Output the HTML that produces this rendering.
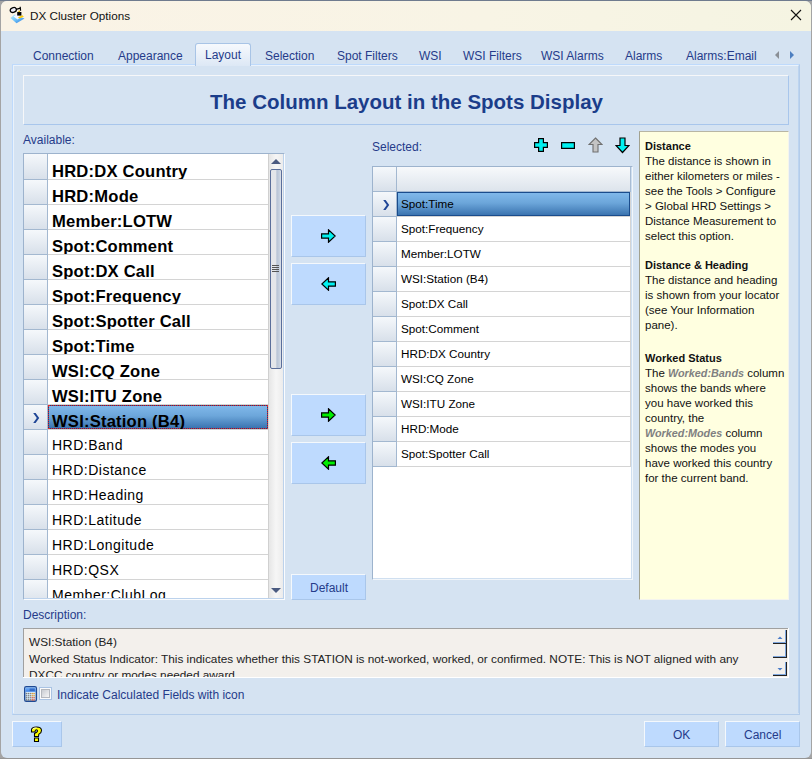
<!DOCTYPE html>
<html><head><meta charset="utf-8">
<style>
*{box-sizing:border-box;margin:0;padding:0}
html,body{width:812px;height:759px;overflow:hidden;background:#a4a4a4;font-family:"Liberation Sans",sans-serif;position:relative}
.a{position:absolute}
.t{position:absolute;white-space:nowrap;line-height:1}
.tab{position:absolute;top:50px;font-size:12px;color:#253b8a;white-space:nowrap;line-height:1}
.btn{position:absolute;background:#bedafe;border-top:1px solid #f4f8fc;border-left:1px solid #f4f8fc;border-right:1px solid #a9c6ea;border-bottom:1px solid #a9c6ea}
.lbl{position:absolute;font-size:12px;color:#253b8a;white-space:nowrap;line-height:1}
.rh{position:absolute;background:linear-gradient(#f5f8fb,#d8e0ea);border-right:1px solid #a3b8d0;border-bottom:1px solid #a3b8d0}
.rc{position:absolute;background:#fff;border-bottom:1px solid #d4d4d4;overflow:hidden;white-space:nowrap;color:#000}
.clip{position:absolute;overflow:hidden}
</style></head><body>
<div class="a" style="left:0;top:0;width:812px;height:1px;background:#6f7b8e"></div>
<div class="a" style="left:0;top:758px;width:812px;height:1px;background:#959595"></div>
<div class="a" style="left:1px;top:1px;width:810px;height:757px;background:#d5e3f2;border-radius:6px"></div>
<div class="a" style="left:1px;top:1px;width:810px;height:30px;background:linear-gradient(90deg,#faf3e6,#f8f4e5 60%,#f5f4e2);border-radius:6px 6px 0 0"></div>
<svg class="a" style="left:9px;top:5px" width="17" height="19" viewBox="0 0 17 19">
<defs><linearGradient id="gb" x1="0" y1="0" x2="1" y2="1"><stop offset="0" stop-color="#b8eeff"/><stop offset="0.5" stop-color="#6cc0f8"/><stop offset="1" stop-color="#2a78e0"/></linearGradient></defs>
<path d="M1.5 13L5.5 9.5L15.5 13.5L7.5 18.2Z" fill="url(#gb)"/>
<path d="M4.5 11.5L7.5 9.5L12.5 11.8L8.5 14.5Z" fill="#f6f6ff"/>
<path d="M9 12.2L13.5 10.3L14.8 11.8L10.2 13.6Z" fill="#ffcc00"/>
<ellipse cx="4.3" cy="5" rx="3.1" ry="2.4" transform="rotate(-22 4.3 5)" fill="#ececf8" stroke="#000" stroke-width="1.3"/>
<path d="M7 4.3L11.5 3.2M11.2 1.8L11.6 5.8" stroke="#000" stroke-width="1.2"/>
<path d="M8.2 7H12.4V10.6H8.2Z" fill="#000"/>
<circle cx="10.2" cy="6.3" r="0.9" fill="#d8b000"/>
</svg>
<div class="t" style="left:30px;top:10px;font-size:11.7px;color:#111">DX Cluster Options</div>
<svg class="a" style="left:790px;top:9px" width="12" height="12" viewBox="0 0 12 12"><path d="M1 1L11 11M11 1L1 11" stroke="#111" stroke-width="1.1"/></svg>
<div class="tab" style="left:33px">Connection</div>
<div class="tab" style="left:118px">Appearance</div>
<div class="tab" style="left:265px">Selection</div>
<div class="tab" style="left:337px">Spot Filters</div>
<div class="tab" style="left:419px">WSI</div>
<div class="tab" style="left:463px">WSI Filters</div>
<div class="tab" style="left:541px">WSI Alarms</div>
<div class="tab" style="left:625px">Alarms</div>
<div class="tab" style="left:686px">Alarms:Email</div>
<svg class="a" style="left:774px;top:50px" width="22" height="10" viewBox="0 0 22 10"><path d="M5 1L1 5L5 9Z" fill="#8a8f96"/><path d="M16 1L20 5L16 9Z" fill="#4d7fc0"/></svg>
<div class="a" style="left:12px;top:64px;width:788px;height:651px;border:1px solid #b3ccea;border-top-color:#bedafc;border-left-color:#bedafc"></div>
<div class="a" style="left:13px;top:65px;width:786px;height:648px;border-top:1px solid #eaf2fb;border-left:1px solid #eaf2fb;border-right:1px solid #bcd4f0"></div>
<div class="a" style="left:195px;top:43px;width:56px;height:23px;border:1px solid #a8c4e6;border-bottom:none;border-radius:3px 3px 0 0;background:linear-gradient(#f6f9fd,#dde8f5)"></div>
<div class="tab" style="left:205px;top:49px">Layout</div>
<div class="a" style="left:23px;top:75px;width:766px;height:50px;border:1px solid #a8c6ec;border-top-color:#f6f7f9;border-left-color:#f6f7f9"></div>
<div class="t" style="left:210px;top:92px;font-size:20.5px;font-weight:bold;color:#1b3d8a">The Column Layout in the Spots Display</div>
<div class="lbl" style="left:23px;top:134px">Available:</div>
<div class="lbl" style="left:372px;top:141px">Selected:</div>
<div class="a" style="left:23px;top:153px;width:262px;height:447px;border:1px solid #fafcfe;border-top-color:#9db3cd;border-left-color:#9db3cd;background:#fff"></div>
<div class="a" style="left:24px;top:154px;width:260px;height:445px;border-right:1px solid #bcd2ec;border-bottom:1px solid #bcd2ec"></div>
<div class="clip" style="left:24px;top:154px;width:244px;height:444px">
<div class="rh" style="left:0;top:0px;width:24px;height:26px"></div>
<div class="rc" style="left:24px;top:0px;width:220px;height:26px"></div>
<div class="clip" style="left:24px;top:0px;width:220px;height:25px"><div class="t" style="left:4px;top:10px;font-size:16.6px;font-weight:bold;color:#000;letter-spacing:0.2px">HRD:DX Country</div></div>
<div class="rh" style="left:0;top:26px;width:24px;height:25px"></div>
<div class="rc" style="left:24px;top:26px;width:220px;height:25px"></div>
<div class="clip" style="left:24px;top:26px;width:220px;height:24px"><div class="t" style="left:4px;top:9px;font-size:16.6px;font-weight:bold;color:#000;letter-spacing:0.2px">HRD:Mode</div></div>
<div class="rh" style="left:0;top:51px;width:24px;height:25px"></div>
<div class="rc" style="left:24px;top:51px;width:220px;height:25px"></div>
<div class="clip" style="left:24px;top:51px;width:220px;height:24px"><div class="t" style="left:4px;top:9px;font-size:16.6px;font-weight:bold;color:#000;letter-spacing:0.2px">Member:LOTW</div></div>
<div class="rh" style="left:0;top:76px;width:24px;height:25px"></div>
<div class="rc" style="left:24px;top:76px;width:220px;height:25px"></div>
<div class="clip" style="left:24px;top:76px;width:220px;height:24px"><div class="t" style="left:4px;top:9px;font-size:16.6px;font-weight:bold;color:#000;letter-spacing:0.2px">Spot:Comment</div></div>
<div class="rh" style="left:0;top:101px;width:24px;height:25px"></div>
<div class="rc" style="left:24px;top:101px;width:220px;height:25px"></div>
<div class="clip" style="left:24px;top:101px;width:220px;height:24px"><div class="t" style="left:4px;top:9px;font-size:16.6px;font-weight:bold;color:#000;letter-spacing:0.2px">Spot:DX Call</div></div>
<div class="rh" style="left:0;top:126px;width:24px;height:25px"></div>
<div class="rc" style="left:24px;top:126px;width:220px;height:25px"></div>
<div class="clip" style="left:24px;top:126px;width:220px;height:24px"><div class="t" style="left:4px;top:9px;font-size:16.6px;font-weight:bold;color:#000;letter-spacing:0.2px">Spot:Frequency</div></div>
<div class="rh" style="left:0;top:151px;width:24px;height:25px"></div>
<div class="rc" style="left:24px;top:151px;width:220px;height:25px"></div>
<div class="clip" style="left:24px;top:151px;width:220px;height:24px"><div class="t" style="left:4px;top:9px;font-size:16.6px;font-weight:bold;color:#000;letter-spacing:0.2px">Spot:Spotter Call</div></div>
<div class="rh" style="left:0;top:176px;width:24px;height:25px"></div>
<div class="rc" style="left:24px;top:176px;width:220px;height:25px"></div>
<div class="clip" style="left:24px;top:176px;width:220px;height:24px"><div class="t" style="left:4px;top:9px;font-size:16.6px;font-weight:bold;color:#000;letter-spacing:0.2px">Spot:Time</div></div>
<div class="rh" style="left:0;top:201px;width:24px;height:25px"></div>
<div class="rc" style="left:24px;top:201px;width:220px;height:25px"></div>
<div class="clip" style="left:24px;top:201px;width:220px;height:24px"><div class="t" style="left:4px;top:9px;font-size:16.6px;font-weight:bold;color:#000;letter-spacing:0.2px">WSI:CQ Zone</div></div>
<div class="rh" style="left:0;top:226px;width:24px;height:25px"></div>
<div class="rc" style="left:24px;top:226px;width:220px;height:25px"></div>
<div class="clip" style="left:24px;top:226px;width:220px;height:24px"><div class="t" style="left:4px;top:9px;font-size:16.6px;font-weight:bold;color:#000;letter-spacing:0.2px">WSI:ITU Zone</div></div>
<div class="rh" style="left:0;top:251px;width:24px;height:25px"></div>
<div class="rc" style="left:24px;top:251px;width:220px;height:25px"></div>
<div class="a" style="left:24px;top:251px;width:220px;height:24px;background:#1c3f80"></div>
<div class="a" style="left:24px;top:251px;width:220px;height:24px;border:1px dotted #e02828;background:linear-gradient(#80b8ea,#6ca6da 45%,#3b74b0) padding-box"></div>
<svg class="a" style="left:9px;top:259px" width="7" height="10" viewBox="0 0 7 10"><path d="M0.2 0L2.6 0L6.2 5L2.6 10L0.2 10L3.8 5Z" fill="#1f4596"/></svg>
<div class="clip" style="left:24px;top:251px;width:220px;height:24px"><div class="t" style="left:4px;top:9px;font-size:16.6px;font-weight:bold;color:#000;letter-spacing:0.2px">WSI:Station (B4)</div></div>
<div class="rh" style="left:0;top:276px;width:24px;height:25px"></div>
<div class="rc" style="left:24px;top:276px;width:220px;height:25px"></div>
<div class="t" style="left:28px;top:284px;font-size:14px;color:#000;letter-spacing:0.5px">HRD:Band</div>
<div class="rh" style="left:0;top:301px;width:24px;height:25px"></div>
<div class="rc" style="left:24px;top:301px;width:220px;height:25px"></div>
<div class="t" style="left:28px;top:309px;font-size:14px;color:#000;letter-spacing:0.5px">HRD:Distance</div>
<div class="rh" style="left:0;top:326px;width:24px;height:25px"></div>
<div class="rc" style="left:24px;top:326px;width:220px;height:25px"></div>
<div class="t" style="left:28px;top:334px;font-size:14px;color:#000;letter-spacing:0.5px">HRD:Heading</div>
<div class="rh" style="left:0;top:351px;width:24px;height:25px"></div>
<div class="rc" style="left:24px;top:351px;width:220px;height:25px"></div>
<div class="t" style="left:28px;top:359px;font-size:14px;color:#000;letter-spacing:0.5px">HRD:Latitude</div>
<div class="rh" style="left:0;top:376px;width:24px;height:25px"></div>
<div class="rc" style="left:24px;top:376px;width:220px;height:25px"></div>
<div class="t" style="left:28px;top:384px;font-size:14px;color:#000;letter-spacing:0.5px">HRD:Longitude</div>
<div class="rh" style="left:0;top:401px;width:24px;height:25px"></div>
<div class="rc" style="left:24px;top:401px;width:220px;height:25px"></div>
<div class="t" style="left:28px;top:409px;font-size:14px;color:#000;letter-spacing:0.5px">HRD:QSX</div>
<div class="rh" style="left:0;top:426px;width:24px;height:25px"></div>
<div class="rc" style="left:24px;top:426px;width:220px;height:25px"></div>
<div class="t" style="left:28px;top:434px;font-size:14px;color:#000;letter-spacing:0.5px">Member:ClubLog</div>
</div>
<div class="a" style="left:268px;top:154px;width:15px;height:444px;background:linear-gradient(90deg,#e6e6e6,#f6f6f6 50%,#ececec);border-left:1px solid #d0d0d0"></div>
<div class="a" style="left:270px;top:169px;width:12px;height:200px;border:1.5px solid #5a6e9a;border-radius:2px;background:linear-gradient(90deg,#e4e6ea,#e4e6ea 45%,#b8c4d6 60%,#c8d2e0 85%,#dde2ea)"></div>
<svg class="a" style="left:271px;top:264px" width="9" height="9" viewBox="0 0 9 9"><path d="M1 1.5H8M1 3.5H8M1 5.5H8M1 7.5H8" stroke="#555" stroke-width="1"/></svg>
<svg class="a" style="left:270px;top:158px" width="12" height="7" viewBox="0 0 12 7"><path d="M1 6L6 1L11 6Z" fill="#4a5a80"/></svg>
<svg class="a" style="left:270px;top:587px" width="12" height="7" viewBox="0 0 12 7"><path d="M1 1L6 6L11 1Z" fill="#4a5a80"/></svg>
<div class="btn" style="left:291px;top:215px;width:75px;height:42px"></div>
<svg class="a" style="left:321px;top:229px" width="15" height="14" viewBox="0 0 15 14"><path d="M0.6 4.8H7.5V0.8L14.2 7L7.5 13.2V9.2H0.6Z" fill="#00f0f0" stroke="#000" stroke-width="1.2" stroke-linejoin="miter"/></svg>
<div class="btn" style="left:291px;top:263px;width:75px;height:42px"></div>
<svg class="a" style="left:321px;top:277px" width="15" height="14" viewBox="0 0 15 14"><path d="M14.4 4.8H7.5V0.8L0.8 7L7.5 13.2V9.2H14.4Z" fill="#00f0f0" stroke="#000" stroke-width="1.2" stroke-linejoin="miter"/></svg>
<div class="btn" style="left:291px;top:394px;width:75px;height:42px"></div>
<svg class="a" style="left:321px;top:408px" width="15" height="14" viewBox="0 0 15 14"><path d="M0.6 4.8H7.5V0.8L14.2 7L7.5 13.2V9.2H0.6Z" fill="#00ee00" stroke="#000" stroke-width="1.2" stroke-linejoin="miter"/></svg>
<div class="btn" style="left:291px;top:442px;width:75px;height:42px"></div>
<svg class="a" style="left:321px;top:456px" width="15" height="14" viewBox="0 0 15 14"><path d="M14.4 4.8H7.5V0.8L0.8 7L7.5 13.2V9.2H14.4Z" fill="#00ee00" stroke="#000" stroke-width="1.2" stroke-linejoin="miter"/></svg>
<div class="btn" style="left:291px;top:574px;width:75px;height:26px"></div>
<div class="t" style="left:310px;top:582px;font-size:12px;color:#253b8a">Default</div>
<div class="a" style="left:372px;top:166px;width:261px;height:414px;border:1px solid #f2f6fa;border-top-color:#9db3cd;border-left-color:#9db3cd;background:#fff"></div>
<div class="a" style="left:373px;top:167px;width:259px;height:412px;border-right:1px solid #cfdff0;border-bottom:1px solid #cfdff0"></div>
<div class="a" style="left:373px;top:167px;width:258px;height:411px;overflow:hidden">
<div class="rh" style="left:0;top:0;width:24px;height:25px"></div>
<div class="a" style="left:24px;top:0;width:234px;height:25px;background:linear-gradient(#f7f9fb,#dde4ec);border-bottom:1px solid #a3b8d0;border-right:1px solid #a8bcd4"></div>
<div class="rh" style="left:0;top:25px;width:24px;height:25px"></div>
<div class="rc" style="left:24px;top:25px;width:234px;height:25px;border-right:1px solid #d4d4d4"></div>
<div class="a" style="left:24px;top:25px;width:233px;height:24px;background:linear-gradient(#80b8ea,#6ca6da 45%,#3b74b0);border:1.5px solid #1a4c8c"></div>
<svg class="a" style="left:10px;top:33px" width="7" height="10" viewBox="0 0 7 10"><path d="M0.2 0L2.6 0L6.2 5L2.6 10L0.2 10L3.8 5Z" fill="#1f4596"/></svg>
<div class="t" style="left:28px;top:31px;font-size:11.7px;color:#000">Spot:Time</div>
<div class="rh" style="left:0;top:50px;width:24px;height:25px"></div>
<div class="rc" style="left:24px;top:50px;width:234px;height:25px;border-right:1px solid #d4d4d4"></div>
<div class="t" style="left:28px;top:56px;font-size:11.7px;color:#000">Spot:Frequency</div>
<div class="rh" style="left:0;top:75px;width:24px;height:25px"></div>
<div class="rc" style="left:24px;top:75px;width:234px;height:25px;border-right:1px solid #d4d4d4"></div>
<div class="t" style="left:28px;top:81px;font-size:11.7px;color:#000">Member:LOTW</div>
<div class="rh" style="left:0;top:100px;width:24px;height:25px"></div>
<div class="rc" style="left:24px;top:100px;width:234px;height:25px;border-right:1px solid #d4d4d4"></div>
<div class="t" style="left:28px;top:106px;font-size:11.7px;color:#000">WSI:Station (B4)</div>
<div class="rh" style="left:0;top:125px;width:24px;height:25px"></div>
<div class="rc" style="left:24px;top:125px;width:234px;height:25px;border-right:1px solid #d4d4d4"></div>
<div class="t" style="left:28px;top:131px;font-size:11.7px;color:#000">Spot:DX Call</div>
<div class="rh" style="left:0;top:150px;width:24px;height:25px"></div>
<div class="rc" style="left:24px;top:150px;width:234px;height:25px;border-right:1px solid #d4d4d4"></div>
<div class="t" style="left:28px;top:156px;font-size:11.7px;color:#000">Spot:Comment</div>
<div class="rh" style="left:0;top:175px;width:24px;height:25px"></div>
<div class="rc" style="left:24px;top:175px;width:234px;height:25px;border-right:1px solid #d4d4d4"></div>
<div class="t" style="left:28px;top:181px;font-size:11.7px;color:#000">HRD:DX Country</div>
<div class="rh" style="left:0;top:200px;width:24px;height:25px"></div>
<div class="rc" style="left:24px;top:200px;width:234px;height:25px;border-right:1px solid #d4d4d4"></div>
<div class="t" style="left:28px;top:206px;font-size:11.7px;color:#000">WSI:CQ Zone</div>
<div class="rh" style="left:0;top:225px;width:24px;height:25px"></div>
<div class="rc" style="left:24px;top:225px;width:234px;height:25px;border-right:1px solid #d4d4d4"></div>
<div class="t" style="left:28px;top:231px;font-size:11.7px;color:#000">WSI:ITU Zone</div>
<div class="rh" style="left:0;top:250px;width:24px;height:25px"></div>
<div class="rc" style="left:24px;top:250px;width:234px;height:25px;border-right:1px solid #d4d4d4"></div>
<div class="t" style="left:28px;top:256px;font-size:11.7px;color:#000">HRD:Mode</div>
<div class="rh" style="left:0;top:275px;width:24px;height:25px"></div>
<div class="rc" style="left:24px;top:275px;width:234px;height:25px;border-right:1px solid #d4d4d4"></div>
<div class="t" style="left:28px;top:281px;font-size:11.7px;color:#000">Spot:Spotter Call</div>
</div>
<svg class="a" style="left:534px;top:138px" width="14" height="14" viewBox="0 0 14 14"><path d="M4.6 0.6H9.4V4.6H13.4V9.4H9.4V13.4H4.6V9.4H0.6V4.6H4.6Z" fill="#00f0f0" stroke="#000" stroke-width="1.2"/></svg>
<svg class="a" style="left:561px;top:142px" width="14" height="7" viewBox="0 0 14 7"><path d="M0.6 0.6H13.4V6.4H0.6Z" fill="#00f0f0" stroke="#000" stroke-width="1.2"/></svg>
<svg class="a" style="left:588px;top:137px" width="15" height="16" viewBox="0 0 15 16"><path d="M7.5 1L14 7.5H10V15H5V7.5H1Z" fill="#c4c4c4" stroke="#707070" stroke-width="1.1"/></svg>
<svg class="a" style="left:615px;top:137px" width="15" height="17" viewBox="0 0 15 17"><path d="M5 1H10V8.5H14L7.5 15.5L1 8.5H5Z" fill="#00f0f0" stroke="#000" stroke-width="1.2"/></svg>
<div class="a" style="left:639px;top:131px;width:150px;height:469px;background:#ffffe0;border:1px solid #f4f4ee;border-left-color:#a2a290;border-top-color:#b8b6a4"></div>
<div class="t" style="left:645px;top:141px;font-size:11px;font-weight:bold;color:#111">Distance</div>
<div class="t" style="left:645px;top:156px;font-size:11.5px;color:#111">The distance is shown in</div>
<div class="t" style="left:645px;top:171px;font-size:11.5px;color:#111">either kilometers or miles -</div>
<div class="t" style="left:645px;top:186px;font-size:11.5px;color:#111">see the Tools &gt; Configure</div>
<div class="t" style="left:645px;top:201px;font-size:11.5px;color:#111">&gt; Global HRD Settings &gt;</div>
<div class="t" style="left:645px;top:216px;font-size:11.5px;color:#111">Distance Measurement to</div>
<div class="t" style="left:645px;top:231px;font-size:11.5px;color:#111">select this option.</div>
<div class="t" style="left:645px;top:246px;font-size:11.5px;color:#111"></div>
<div class="t" style="left:645px;top:260px;font-size:11px;font-weight:bold;color:#111">Distance &amp; Heading</div>
<div class="t" style="left:645px;top:275px;font-size:11.5px;color:#111">The distance and heading</div>
<div class="t" style="left:645px;top:290px;font-size:11.5px;color:#111">is shown from your locator</div>
<div class="t" style="left:645px;top:305px;font-size:11.5px;color:#111">(see Your Information</div>
<div class="t" style="left:645px;top:320px;font-size:11.5px;color:#111">pane).</div>
<div class="t" style="left:645px;top:336px;font-size:11.5px;color:#111"></div>
<div class="t" style="left:645px;top:353px;font-size:11px;font-weight:bold;color:#111">Worked Status</div>
<div class="t" style="left:645px;top:368px;font-size:11.5px;color:#111">The <i style="color:#808080;font-weight:bold;font-size:10.8px">Worked:Bands</i> column</div>
<div class="t" style="left:645px;top:383px;font-size:11.5px;color:#111">shows the bands where</div>
<div class="t" style="left:645px;top:398px;font-size:11.5px;color:#111">you have worked this</div>
<div class="t" style="left:645px;top:413px;font-size:11.5px;color:#111">country, the</div>
<div class="t" style="left:645px;top:428px;font-size:11.5px;color:#111"><i style="color:#808080;font-weight:bold;font-size:10.8px">Worked:Modes</i> column</div>
<div class="t" style="left:645px;top:443px;font-size:11.5px;color:#111">shows the modes you</div>
<div class="t" style="left:645px;top:458px;font-size:11.5px;color:#111">have worked this country</div>
<div class="t" style="left:645px;top:473px;font-size:11.5px;color:#111">for the current band.</div>
<div class="lbl" style="left:23px;top:609px">Description:</div>
<div class="a" style="left:23px;top:628px;width:766px;height:50px;background:#f3f0ec;border:1px solid #f7f7f7;border-top-color:#a0a0a0;border-left-color:#a0a0a0;overflow:hidden">
<div class="t" style="left:5px;top:8px;font-size:11.8px;color:#222">WSI:Station (B4)</div>
<div class="t" style="left:5px;top:25px;font-size:11.8px;color:#222">Worked Status Indicator: This indicates whether this STATION is not-worked, worked, or confirmed. NOTE: This is NOT aligned with any</div>
<div class="t" style="left:5px;top:41px;font-size:11.8px;color:#222">DXCC country or modes needed award.</div>
</div>
<div class="a" style="left:773px;top:630px;width:14px;height:14px;border-right:1px solid #222;border-bottom:1px solid #222;background:#f3f0ec"></div>
<div class="a" style="left:773px;top:630px;width:13px;height:13px;border-right:1px solid #7ea6dc;border-bottom:1px solid #7ea6dc"></div>
<div class="a" style="left:773px;top:644px;width:14px;height:14px;border-right:1px solid #222;border-bottom:1px solid #222;background:#f3f0ec"></div>
<div class="a" style="left:773px;top:644px;width:13px;height:13px;border-right:1px solid #7ea6dc;border-bottom:1px solid #7ea6dc"></div>
<div class="a" style="left:773px;top:662px;width:14px;height:14px;border-right:1px solid #222;border-bottom:1px solid #222;background:#f3f0ec"></div>
<div class="a" style="left:773px;top:662px;width:13px;height:13px;border-right:1px solid #7ea6dc;border-bottom:1px solid #7ea6dc"></div>
<svg class="a" style="left:777px;top:636px" width="6" height="3" viewBox="0 0 6 3"><path d="M0.5 3L3 0.5L5.5 3Z" fill="#4a7cc8"/></svg>
<svg class="a" style="left:777px;top:668px" width="6" height="3" viewBox="0 0 6 3"><path d="M0.5 0L3 2.5L5.5 0Z" fill="#4a7cc8"/></svg>
<div class="a" style="left:788px;top:628px;width:1px;height:50px;background:#fff"></div>
<div class="a" style="left:23px;top:677px;width:766px;height:1px;background:#fff"></div>
<svg class="a" style="left:24px;top:686px" width="14" height="16" viewBox="0 0 15 16" preserveAspectRatio="none"><defs><linearGradient id="cd" x1="0" y1="0" x2="0" y2="1"><stop offset="0" stop-color="#7ab4f8"/><stop offset="1" stop-color="#3a7ee4"/></linearGradient></defs><rect x="0.75" y="0.75" width="12.5" height="14.5" rx="1.6" fill="#d6ecfb" stroke="#1f4a94" stroke-width="1.5"/><rect x="1.5" y="1.5" width="11" height="4.3" fill="url(#cd)"/><rect x="6" y="2.5" width="5.5" height="2.5" fill="#2a5cb8" opacity="0.7"/><circle cx="2.60" cy="7.60" r="0.8" fill="#7a7a7a"/><circle cx="4.65" cy="7.60" r="0.8" fill="#7a7a7a"/><circle cx="6.70" cy="7.60" r="0.8" fill="#7a7a7a"/><circle cx="8.75" cy="7.60" r="0.8" fill="#e0901a"/><circle cx="10.80" cy="7.60" r="0.8" fill="#e0901a"/><circle cx="2.60" cy="9.70" r="0.8" fill="#7a7a7a"/><circle cx="4.65" cy="9.70" r="0.8" fill="#7a7a7a"/><circle cx="6.70" cy="9.70" r="0.8" fill="#7a7a7a"/><circle cx="8.75" cy="9.70" r="0.8" fill="#e0901a"/><circle cx="10.80" cy="9.70" r="0.8" fill="#e0901a"/><circle cx="2.60" cy="11.80" r="0.8" fill="#7a7a7a"/><circle cx="4.65" cy="11.80" r="0.8" fill="#7a7a7a"/><circle cx="6.70" cy="11.80" r="0.8" fill="#7a7a7a"/><circle cx="8.75" cy="11.80" r="0.8" fill="#d84a28"/><circle cx="10.80" cy="11.80" r="0.8" fill="#d84a28"/><circle cx="2.60" cy="13.90" r="0.8" fill="#7a7a7a"/><circle cx="4.65" cy="13.90" r="0.8" fill="#7a7a7a"/><circle cx="6.70" cy="13.90" r="0.8" fill="#7a7a7a"/><circle cx="8.75" cy="13.90" r="0.8" fill="#d84a28"/><circle cx="10.80" cy="13.90" r="0.8" fill="#d84a28"/></svg>
<div class="a" style="left:39px;top:687px;width:13px;height:13px;border:1px solid #a9c3e3;background:#fbfbfb"></div>
<div class="a" style="left:41px;top:689px;width:9px;height:9px;border:1px solid #b4b8be;background:linear-gradient(135deg,#c8ccd2,#f6f6f6)"></div>
<div class="lbl" style="left:57px;top:689px">Indicate Calculated Fields with icon</div>
<div class="btn" style="left:12px;top:721px;width:50px;height:26px"></div>
<svg class="a" style="left:30px;top:726px" width="13" height="17" viewBox="0 0 13 17"><path d="M1.5 4Q1.5 1 6.5 1Q11.5 1 11.5 4.5Q11.5 7 8.8 8.3L8.5 10.5H4.5V7.5Q7.5 6.5 7.5 4.8Q7.5 3.8 6.3 3.8Q5 3.8 5 6H1.5Z M4.5 12H8.5V15.5H4.5Z" fill="#ffff00" stroke="#000" stroke-width="1.1"/><path d="M2.5 3.5Q3 1.8 6.5 1.8" stroke="#fff" stroke-width="0.8" fill="none"/></svg>
<div class="btn" style="left:644px;top:721px;width:75px;height:26px"></div>
<div class="t" style="left:673px;top:729px;font-size:12px;color:#253b8a">OK</div>
<div class="btn" style="left:725px;top:721px;width:75px;height:26px"></div>
<div class="t" style="left:744px;top:729px;font-size:12px;color:#253b8a">Cancel</div>
</body></html>
